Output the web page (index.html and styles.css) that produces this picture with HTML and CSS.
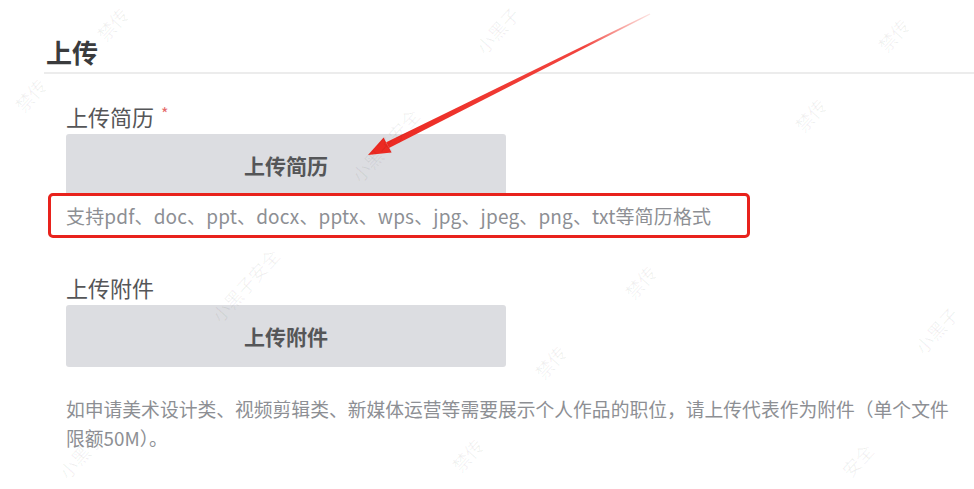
FILE: index.html
```html
<!DOCTYPE html>
<html lang="zh-CN">
<head>
<meta charset="utf-8">
<title>上传</title>
<link rel="stylesheet" href="styles.css">
</head>
<body>
<div class="page">
  <header class="sec-head">
    <h2 class="sec-title">上传</h2>
  </header>
  <div class="form">
    <div class="field field-resume">
      <div class="label">上传简历<span class="req">*</span></div>
      <button class="upload-btn" type="button">上传简历</button>
      <div class="hint">支持pdf、doc、ppt、docx、pptx、wps、jpg、jpeg、png、txt等简历格式</div>
    </div>
    <div class="field field-attach">
      <div class="label">上传附件</div>
      <button class="upload-btn" type="button">上传附件</button>
      <p class="note">如申请美术设计类、视频剪辑类、新媒体运营等需要展示个人作品的职位，请上传代表作为附件（单个文件限额50M）。</p>
    </div>
  </div>

  <svg class="arrow" width="974" height="489" viewBox="0 0 974 489" aria-hidden="true">
    <defs>
      <linearGradient id="fade" x1="650" y1="14" x2="388" y2="145" gradientUnits="userSpaceOnUse">
        <stop offset="0" stop-color="#f04a3e" stop-opacity="0.15"/>
        <stop offset="0.25" stop-color="#f0302a" stop-opacity="0.9"/>
        <stop offset="1" stop-color="#ec2a22"/>
      </linearGradient>
    </defs>
    <polygon points="649.7,13.5 650.3,14.5 389,148 386.2,142.2" fill="url(#fade)"/>
    <polygon points="368,155 383.6,137.6 391.6,152.6" fill="#ec2a22"/>
  </svg>

  <div class="watermarks" aria-hidden="true">
    <span class="wm wm1">禁传</span>
    <span class="wm wm2">禁传</span>
    <span class="wm wm3">小黑子</span>
    <span class="wm wm4">禁传</span>
    <span class="wm wm5">小黑子安全</span>
    <span class="wm wm6">禁传</span>
    <span class="wm wm7">禁传</span>
    <span class="wm wm8">小黑子安全</span>
    <span class="wm wm9">禁传</span>
    <span class="wm wm10">小黑子</span>
    <span class="wm wm11">禁传</span>
    <span class="wm wm12">小黑子</span>
    <span class="wm wm13">安全</span>
  </div>
</div>
</body>
</html>
```

FILE: styles.css
```css
html, body {
  margin: 0;
  padding: 0;
  background: #ffffff;
}

body {
  font-family: "Noto Sans CJK SC", "Noto Sans", sans-serif;
  color: #555;
}

.page {
  position: relative;
  width: 974px;
  height: 489px;
  overflow: hidden;
}

.sec-head {
  margin-left: 44px;
  padding: 36px 0 4px 2px;
  border-bottom: 2px solid #ececec;
}

.sec-title {
  margin: 0;
  font-size: 26px;
  line-height: 32px;
  font-weight: 700;
  color: #3a3b3d;
}

.form {
  padding-left: 66px;
}

.field-resume {
  margin-top: 27px;
}

.field-attach {
  margin-top: 34px;
}

.label {
  font-size: 22px;
  line-height: 30px;
  color: #555658;
}

.req {
  color: #e56a6a;
  font-size: 16px;
  line-height: 16px;
  margin-left: 7px;
  vertical-align: 6px;
}

.upload-btn {
  display: block;
  width: 440px;
  height: 62px;
  margin-top: 3px;
  padding: 0;
  border: 0;
  border-radius: 3px;
  background: #dcdde1;
  font-family: inherit;
  font-size: 21px;
  font-weight: 600;
  color: #555658;
}

.hint {
  box-sizing: border-box;
  width: 702px;
  height: 45px;
  margin: -3px 0 0 -18px;
  padding-left: 15px;
  border: 3px solid #e8221c;
  border-radius: 5px;
  font-size: 19px;
  letter-spacing: 0.15px;
  line-height: 39px;
  color: #8d8f94;
  white-space: nowrap;
}

.note {
  width: 895px;
  margin: 27px 0 0;
  font-size: 18.8px;
  line-height: 29px;
  color: #8d8f94;
}

.arrow {
  position: absolute;
  left: 0;
  top: 0;
  pointer-events: none;
}

.watermarks {
  position: absolute;
  inset: 0;
  pointer-events: none;
}

.wm {
  position: absolute;
  font-size: 18px;
  color: rgba(0, 0, 0, 0.06);
  white-space: nowrap;
  transform: translate(-50%, -50%) rotate(-48deg);
}

.wm1 { left: 112px; top: 24px; }
.wm2 { left: 30px; top: 95px; }
.wm3 { left: 497px; top: 30px; }
.wm4 { left: 893px; top: 35px; }
.wm5 { left: 385px; top: 145px; }
.wm6 { left: 810px; top: 115px; }
.wm7 { left: 640px; top: 282px; }
.wm8 { left: 245px; top: 285px; }
.wm9 { left: 550px; top: 362px; }
.wm10 { left: 936px; top: 330px; }
.wm11 { left: 467px; top: 455px; }
.wm12 { left: 80px; top: 455px; }
.wm13 { left: 857px; top: 460px; }
```
